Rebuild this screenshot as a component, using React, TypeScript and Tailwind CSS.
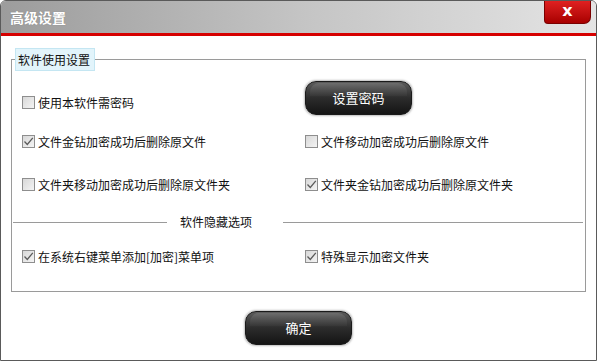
import React from "react";

const font = { fontFamily: '"Noto Sans CJK SC", "Noto Sans", sans-serif' };

function Box({ checked }: { checked?: boolean }) {
  return (
    <span className="flex h-[13px] w-[13px] shrink-0 items-center justify-center border border-[#8e8e8e] bg-gradient-to-br from-[#d8d8d8] to-[#f4f4f4]">
      {checked && (
        <svg width="11" height="11" viewBox="0 0 11 11">
          <path d="M1.5 5.5 L4.3 8.5 L9.8 1.8" fill="none" stroke="#5b5b5b" strokeWidth="1.3" />
        </svg>
      )}
    </span>
  );
}

function Check({ label, checked }: { label: string; checked?: boolean }) {
  return (
    <div className="flex h-[13px] items-center gap-[3px] text-[12px] leading-[13px] text-[#111]">
      <Box checked={checked} />
      <span>{label}</span>
    </div>
  );
}

function DarkButton({ label }: { label: string }) {
  return (
    <button className="relative flex h-[34px] w-[107px] items-center justify-center overflow-hidden rounded-[11px] border border-[#1a1a1a] bg-gradient-to-b from-[#5c5c5c] via-[#2c2c2c] to-[#151515] text-[13px] text-white shadow-[0_0_2px_1px_#bdbdbd]">
      <span className="absolute inset-x-[4px] top-[1px] h-[13px] rounded-t-[9px] bg-gradient-to-b from-[#7a7a7a] to-[#3a3a3a] opacity-60" />
      <span className="relative">{label}</span>
    </button>
  );
}

export default function App() {
  return (
    <div className="h-[361px] w-[599px] bg-white" style={font}>
      <div className="flex h-[361px] w-[597px] flex-col overflow-hidden rounded-t-[6px] border border-[#5a5a5a] bg-white">
        {/* title bar */}
        <div className="flex h-[32px] shrink-0 items-start justify-between bg-gradient-to-r from-[#9c9c9c] via-[#c4c4c4] to-[#e4e4e4]">
          <span className="ml-[9px] mt-[7px] text-[14px] font-bold leading-[18px] text-white [text-shadow:0_0_1px_#777]">
            高级设置
          </span>
          <div className="mr-[5px] flex h-[23px] w-[47px] items-center justify-center rounded-b-[4px] rounded-br-[7px] border border-t-0 border-[#7a0000] bg-gradient-to-b from-[#e02020] to-[#a80000]">
            <span className="mb-[2px] text-[16px] font-bold leading-none text-white" style={{ fontFamily: '"DejaVu Sans", sans-serif' }}>
              x
            </span>
          </div>
        </div>
        <div className="h-[3px] shrink-0 bg-[#d60000]" />

        {/* group box */}
        <fieldset className="mx-[10px] mt-[12px] border border-[#9a9a9a] pb-[28px]">
          <legend className="ml-[3px] h-[23px] w-[80px] border border-[#c4e6f2] bg-[#e2f4fb] pl-[2px] text-[12px] leading-[21px] text-[#111]">
            软件使用设置
          </legend>

          <div className="mt-[10px] grid grid-cols-[283px_1fr] items-start pl-[10px]">
            <div className="mt-[15px]">
              <Check label="使用本软件需密码" />
            </div>
            <DarkButton label="设置密码" />
          </div>

          <div className="mt-[20px] grid grid-cols-[283px_1fr] pl-[10px]">
            <Check label="文件金钻加密成功后删除原文件" checked />
            <Check label="文件移动加密成功后删除原文件" />
          </div>

          <div className="mt-[30px] grid grid-cols-[283px_1fr] pl-[10px]">
            <Check label="文件夹移动加密成功后删除原文件夹" />
            <Check label="文件夹金钻加密成功后删除原文件夹" checked />
          </div>

          <div className="mt-[24px] flex h-[14px] items-center pl-[1px] pr-[2px]">
            <div className="h-px w-[154px] bg-[#9a9a9a]" />
            <span className="ml-[13px] w-[73px] text-[12px] leading-[14px] text-[#111]">软件隐藏选项</span>
            <div className="ml-[30px] h-px flex-1 bg-[#9a9a9a]" />
          </div>

          <div className="mt-[21px] grid grid-cols-[283px_1fr] pl-[10px]">
            <Check label="在系统右键菜单添加[加密]菜单项" checked />
            <Check label="特殊显示加密文件夹" checked />
          </div>
        </fieldset>

        <div className="mt-[19px] flex justify-center">
          <DarkButton label="确定" />
        </div>
      </div>
    </div>
  );
}
